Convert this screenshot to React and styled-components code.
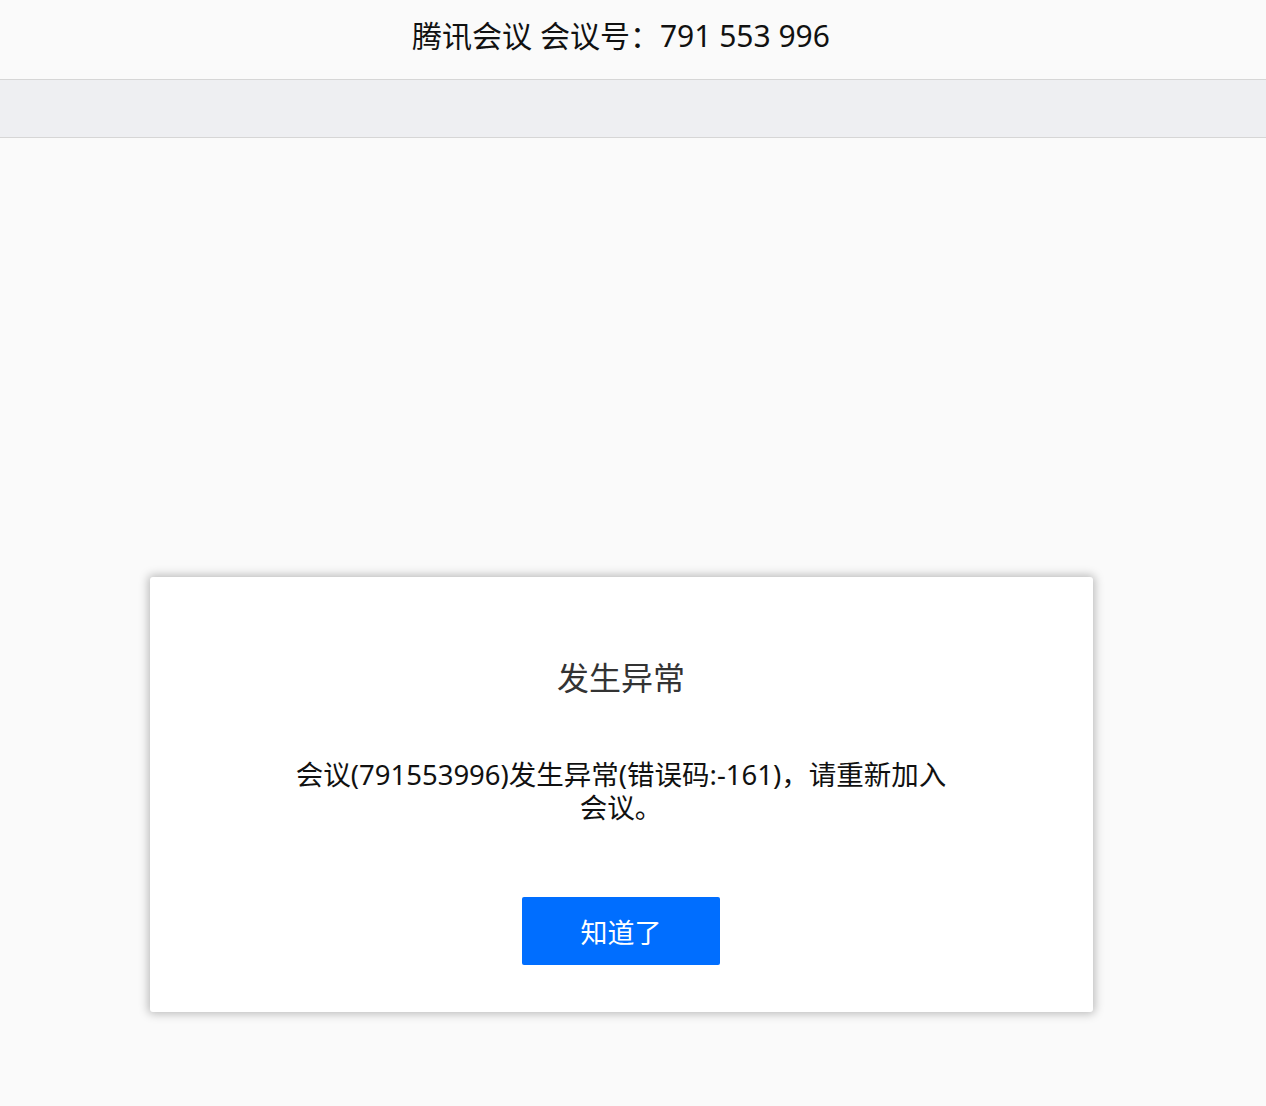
import React from "react";
import styled, { createGlobalStyle } from "styled-components";

const Global = createGlobalStyle`
  html, body { margin: 0; padding: 0; background: #fafafa; }
  body { font-family: "Noto Sans", "Noto Sans CJK SC", sans-serif; }
  * { box-sizing: border-box; }
`;

const Page = styled.div`
  min-height: 1106px;
  display: flex;
  flex-direction: column;
  background: #fafafa;
`;

const Header = styled.header`
  height: 80px;
  border-bottom: 1px solid #d6d6d6;
  display: flex;
  align-items: center;
  justify-content: center;
  padding-right: 24px;
  padding-bottom: 12px;
  font-family: "Noto Sans", "Noto Sans CJK SC", sans-serif;
  font-size: 30px;
  color: #111;
`;

const SubBar = styled.div`
  height: 58px;
  background: #eeeff2;
  border-bottom: 1px solid #d6d6d6;
`;

const Body = styled.main`
  flex: 1;
  display: flex;
  justify-content: center;
  padding-top: 439px;
  padding-right: 24px;
`;

const Dialog = styled.section`
  width: 943px;
  height: 435px;
  background: #fff;
  border-radius: 3px;
  box-shadow: 0 0 10px 2px rgba(0, 0, 0, 0.25);
  display: flex;
  flex-direction: column;
  align-items: center;
  padding: 79px 0 46px;
`;

const Title = styled.h2`
  margin: 0;
  font-weight: 400;
  font-size: 32px;
  line-height: 44px;
  color: #333;
  font-family: "Noto Sans", "Noto Sans CJK SC", sans-serif;
`;

const Message = styled.p`
  margin: 58px 0 0;
  width: 658px;
  text-align: center;
  font-size: 27.5px;
  line-height: 33px;
  color: #111;
  font-family: "Noto Sans", "Noto Sans CJK SC", sans-serif;
`;

const Button = styled.button`
  margin-top: 73px;
  width: 198px;
  height: 68px;
  border: none;
  border-radius: 2px;
  background: #006eff;
  color: #fff;
  font-size: 27px;
  font-family: "Noto Sans", "Noto Sans CJK SC", sans-serif;
  cursor: pointer;
`;

export default function App() {
  return (
    <Page>
      <Global />
      <Header>腾讯会议 会议号：791 553 996</Header>
      <SubBar />
      <Body>
        <Dialog>
          <Title>发生异常</Title>
          <Message>会议(791553996)发生异常(错误码:-161)，请重新加入会议。</Message>
          <Button>知道了</Button>
        </Dialog>
      </Body>
    </Page>
  );
}
